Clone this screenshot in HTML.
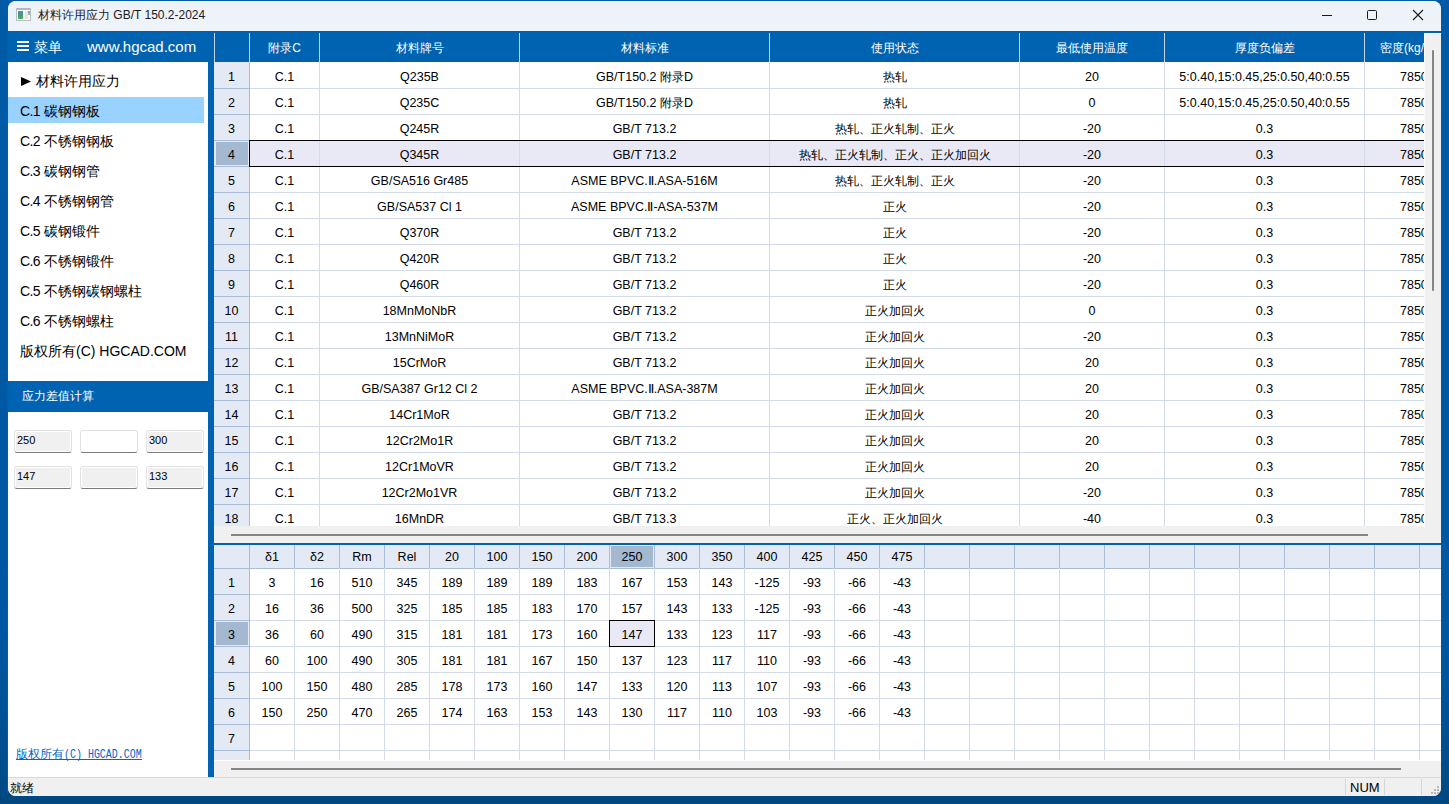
<!DOCTYPE html><html><head><meta charset="utf-8"><style>
*{margin:0;padding:0;box-sizing:border-box}
html,body{width:1449px;height:804px;overflow:hidden}
body{position:relative;font-family:"Liberation Sans",sans-serif;color:#000;
background:linear-gradient(180deg,#005aa6 0%,#0057a1 80%,#004d8a 97%,#00467f 100%)}
.abs{position:absolute}
#win{position:absolute;left:8px;top:1px;width:1433px;height:795px;border-radius:8px;overflow:hidden;background:#f0f0f0}
.tb{position:absolute;left:0;top:0;width:1433px;height:30px;background:#eef2f9}
.t{position:absolute;white-space:nowrap}
.c{text-align:center}
</style></head><body>
<div class="abs" style="left:7px;top:8px;width:1px;height:786px;background:#1f5684"></div>
<div id="win">
<div class="abs" style="left:0px;top:0px;width:1433px;height:30px;background:#eef2f9"></div>
<div class="abs" style="left:8px;top:7px;width:15px;height:13px;background:#fafafa;border:1px solid #b9bdc4;border-top:2px solid #b3b7bf;border-radius:1px"><div class="abs" style="left:1px;top:1px;width:5px;height:8px;background:linear-gradient(180deg,#5d88c4,#3f9b7a 50%,#4fb060)"></div><div class="abs" style="left:8px;top:1px;width:3px;height:8px;background:#e6e6e6"></div><div class="abs" style="left:11px;top:1px;width:2px;height:4px;background:linear-gradient(180deg,#7aa0d8,#8fd07a)"></div></div>
<div class="t" style="left:30px;top:5px;font-size:12px;line-height:18px;color:#1a1a1a">材料许用应力 GB/T 150.2-2024</div>
<div class="abs" style="left:1313px;top:9px;width:12px;height:12px;"><svg width="12" height="12" style="display:block"><rect x="1" y="5" width="10" height="1" fill="#1a1a1a"/></svg></div>
<div class="abs" style="left:1358px;top:8px;width:12px;height:12px;"><svg width="12" height="12" style="display:block"><rect x="1.5" y="1.5" width="9" height="9" rx="1" fill="none" stroke="#1a1a1a" stroke-width="1"/></svg></div>
<div class="abs" style="left:1404px;top:8px;width:12px;height:12px;"><svg width="12" height="12" style="display:block"><path d="M1 1L11 11M11 1L1 11" stroke="#1a1a1a" stroke-width="1.1"/></svg></div>
<div class="abs" style="left:0px;top:30px;width:206px;height:746px;background:#0063b1"></div>
<div class="abs" style="left:0px;top:61px;width:200px;height:319px;background:#fff"></div>
<div class="abs" style="left:0px;top:411px;width:200px;height:365px;background:#fff"></div>
<div class="abs" style="left:9px;top:40px;width:12px;height:2px;background:#fff"></div>
<div class="abs" style="left:9px;top:44px;width:12px;height:2px;background:#fff"></div>
<div class="abs" style="left:9px;top:48px;width:12px;height:2px;background:#fff"></div>
<div class="t" style="left:26px;top:37px;font-size:14px;line-height:18px;color:#fff">菜单</div>
<div class="t" style="left:79px;top:37px;font-size:15px;line-height:18px;color:#fff">www.hgcad.com</div>
<div class="abs" style="left:0px;top:96px;width:196px;height:26px;background:#99d1ff"></div>
<div class="abs" style="left:13px;top:76px;width:10px;height:9px;"><svg width="10" height="9" style="display:block"><path d="M0 0L10 4.5L0 9Z" fill="#000"/></svg></div>
<div class="t" style="left:28px;top:71px;font-size:14px;line-height:18px;color:#000">材料许用应力</div>
<div class="t" style="left:12px;top:101px;font-size:14px;line-height:18px;color:#000"><span style="letter-spacing:-0.6px">C.1</span> 碳钢钢板</div>
<div class="t" style="left:12px;top:131px;font-size:14px;line-height:18px;color:#000"><span style="letter-spacing:-0.6px">C.2</span> 不锈钢钢板</div>
<div class="t" style="left:12px;top:161px;font-size:14px;line-height:18px;color:#000"><span style="letter-spacing:-0.6px">C.3</span> 碳钢钢管</div>
<div class="t" style="left:12px;top:191px;font-size:14px;line-height:18px;color:#000"><span style="letter-spacing:-0.6px">C.4</span> 不锈钢钢管</div>
<div class="t" style="left:12px;top:221px;font-size:14px;line-height:18px;color:#000"><span style="letter-spacing:-0.6px">C.5</span> 碳钢锻件</div>
<div class="t" style="left:12px;top:251px;font-size:14px;line-height:18px;color:#000"><span style="letter-spacing:-0.6px">C.6</span> 不锈钢锻件</div>
<div class="t" style="left:12px;top:281px;font-size:14px;line-height:18px;color:#000"><span style="letter-spacing:-0.6px">C.5</span> 不锈钢碳钢螺柱</div>
<div class="t" style="left:12px;top:311px;font-size:14px;line-height:18px;color:#000"><span style="letter-spacing:-0.6px">C.6</span> 不锈钢螺柱</div>
<div class="t" style="left:12px;top:341px;font-size:14px;line-height:18px;color:#000">版权所有(C) HGCAD.COM</div>
<div class="t" style="left:14px;top:386px;font-size:12px;line-height:18px;color:#fff">应力差值计算</div>
<div class="abs" style="left:6px;top:429px;width:58px;height:23px;background:#f0f0f0;border:1px solid #e2e2e2;border-bottom:1px solid #7c7c7c;border-radius:3px;box-shadow:inset 0 0 0 1px #fff"><div class="t" style="left:2px;top:2px;font-size:11px;line-height:14px">250</div></div>
<div class="abs" style="left:72px;top:429px;width:58px;height:23px;background:#fff;border:1px solid #e2e2e2;border-bottom:1px solid #7c7c7c;border-radius:3px;box-shadow:inset 0 0 0 1px #fff"><div class="t" style="left:2px;top:2px;font-size:11px;line-height:14px"></div></div>
<div class="abs" style="left:138px;top:429px;width:58px;height:23px;background:#f0f0f0;border:1px solid #e2e2e2;border-bottom:1px solid #7c7c7c;border-radius:3px;box-shadow:inset 0 0 0 1px #fff"><div class="t" style="left:2px;top:2px;font-size:11px;line-height:14px">300</div></div>
<div class="abs" style="left:6px;top:465px;width:58px;height:23px;background:#f0f0f0;border:1px solid #e2e2e2;border-bottom:1px solid #7c7c7c;border-radius:3px;box-shadow:inset 0 0 0 1px #fff"><div class="t" style="left:2px;top:2px;font-size:11px;line-height:14px">147</div></div>
<div class="abs" style="left:72px;top:465px;width:58px;height:23px;background:#f0f0f0;border:1px solid #e2e2e2;border-bottom:1px solid #7c7c7c;border-radius:3px;box-shadow:inset 0 0 0 1px #fff"><div class="t" style="left:2px;top:2px;font-size:11px;line-height:14px"></div></div>
<div class="abs" style="left:138px;top:465px;width:58px;height:23px;background:#f0f0f0;border:1px solid #e2e2e2;border-bottom:1px solid #7c7c7c;border-radius:3px;box-shadow:inset 0 0 0 1px #fff"><div class="t" style="left:2px;top:2px;font-size:11px;line-height:14px">133</div></div>
<div class="t" style="left:8px;top:745px;line-height:14px;color:#0066cc"><span style="font-size:12px">版权所有</span><span style="display:inline-block;font-family:'Liberation Mono',monospace;font-size:12px;width:94px;transform:scaleX(0.83);transform-origin:0 0">(C) HGCAD.COM</span></div>
<div class="abs" style="left:8px;top:758px;width:126px;height:1px;background:#0066cc"></div>
<div class="abs" style="left:206px;top:30px;width:1227px;height:495px;background:#fff"></div>
<div class="abs" style="left:206px;top:30px;width:1227px;height:31px;background:#0063b1"></div>
<div class="abs" style="left:206px;top:30px;width:1210px;height:496px;overflow:hidden">
<div class="abs" style="left:0px;top:2px;width:1px;height:29px;background:#c5d6ea"></div>
<div class="abs" style="left:35px;top:2px;width:1px;height:29px;background:#c5d6ea"></div>
<div class="abs" style="left:105px;top:2px;width:1px;height:29px;background:#c5d6ea"></div>
<div class="abs" style="left:305px;top:2px;width:1px;height:29px;background:#c5d6ea"></div>
<div class="abs" style="left:555px;top:2px;width:1px;height:29px;background:#c5d6ea"></div>
<div class="abs" style="left:805px;top:2px;width:1px;height:29px;background:#c5d6ea"></div>
<div class="abs" style="left:950px;top:2px;width:1px;height:29px;background:#c5d6ea"></div>
<div class="abs" style="left:1150px;top:2px;width:1px;height:29px;background:#c5d6ea"></div>
<div class="t c" style="left:36px;top:3px;width:69px;height:29px;font-size:12px;line-height:29px;color:#fff">附录C</div>
<div class="t c" style="left:106px;top:3px;width:199px;height:29px;font-size:12px;line-height:29px;color:#fff">材料牌号</div>
<div class="t c" style="left:306px;top:3px;width:249px;height:29px;font-size:12px;line-height:29px;color:#fff">材料标准</div>
<div class="t c" style="left:556px;top:3px;width:249px;height:29px;font-size:12px;line-height:29px;color:#fff">使用状态</div>
<div class="t c" style="left:806px;top:3px;width:144px;height:29px;font-size:12px;line-height:29px;color:#fff">最低使用温度</div>
<div class="t c" style="left:951px;top:3px;width:199px;height:29px;font-size:12px;line-height:29px;color:#fff">厚度负偏差</div>
<div class="t c" style="left:1166px;top:3px;width:200px;height:29px;font-size:12px;line-height:29px;color:#fff;text-align:left">密度(kg/m3)</div>
<div class="abs" style="left:0px;top:31px;width:35px;height:464px;background:#e3eaf6"></div>
<div class="abs" style="left:2px;top:111px;width:32px;height:23px;background:#a4b9d0"></div>
<div class="abs" style="left:35px;top:110px;width:1175px;height:25px;background:#e9e9f5"></div>
<div class="abs" style="left:0px;top:57px;width:35px;height:1px;background:#a9bdd6"></div>
<div class="abs" style="left:35px;top:57px;width:1175px;height:1px;background:#d3dbe9"></div>
<div class="abs" style="left:0px;top:83px;width:35px;height:1px;background:#a9bdd6"></div>
<div class="abs" style="left:35px;top:83px;width:1175px;height:1px;background:#d3dbe9"></div>
<div class="abs" style="left:0px;top:109px;width:35px;height:1px;background:#a9bdd6"></div>
<div class="abs" style="left:35px;top:109px;width:1175px;height:1px;background:#d3dbe9"></div>
<div class="abs" style="left:0px;top:135px;width:35px;height:1px;background:#a9bdd6"></div>
<div class="abs" style="left:35px;top:135px;width:1175px;height:1px;background:#d3dbe9"></div>
<div class="abs" style="left:0px;top:161px;width:35px;height:1px;background:#a9bdd6"></div>
<div class="abs" style="left:35px;top:161px;width:1175px;height:1px;background:#d3dbe9"></div>
<div class="abs" style="left:0px;top:187px;width:35px;height:1px;background:#a9bdd6"></div>
<div class="abs" style="left:35px;top:187px;width:1175px;height:1px;background:#d3dbe9"></div>
<div class="abs" style="left:0px;top:213px;width:35px;height:1px;background:#a9bdd6"></div>
<div class="abs" style="left:35px;top:213px;width:1175px;height:1px;background:#d3dbe9"></div>
<div class="abs" style="left:0px;top:239px;width:35px;height:1px;background:#a9bdd6"></div>
<div class="abs" style="left:35px;top:239px;width:1175px;height:1px;background:#d3dbe9"></div>
<div class="abs" style="left:0px;top:265px;width:35px;height:1px;background:#a9bdd6"></div>
<div class="abs" style="left:35px;top:265px;width:1175px;height:1px;background:#d3dbe9"></div>
<div class="abs" style="left:0px;top:291px;width:35px;height:1px;background:#a9bdd6"></div>
<div class="abs" style="left:35px;top:291px;width:1175px;height:1px;background:#d3dbe9"></div>
<div class="abs" style="left:0px;top:317px;width:35px;height:1px;background:#a9bdd6"></div>
<div class="abs" style="left:35px;top:317px;width:1175px;height:1px;background:#d3dbe9"></div>
<div class="abs" style="left:0px;top:343px;width:35px;height:1px;background:#a9bdd6"></div>
<div class="abs" style="left:35px;top:343px;width:1175px;height:1px;background:#d3dbe9"></div>
<div class="abs" style="left:0px;top:369px;width:35px;height:1px;background:#a9bdd6"></div>
<div class="abs" style="left:35px;top:369px;width:1175px;height:1px;background:#d3dbe9"></div>
<div class="abs" style="left:0px;top:395px;width:35px;height:1px;background:#a9bdd6"></div>
<div class="abs" style="left:35px;top:395px;width:1175px;height:1px;background:#d3dbe9"></div>
<div class="abs" style="left:0px;top:421px;width:35px;height:1px;background:#a9bdd6"></div>
<div class="abs" style="left:35px;top:421px;width:1175px;height:1px;background:#d3dbe9"></div>
<div class="abs" style="left:0px;top:447px;width:35px;height:1px;background:#a9bdd6"></div>
<div class="abs" style="left:35px;top:447px;width:1175px;height:1px;background:#d3dbe9"></div>
<div class="abs" style="left:0px;top:473px;width:35px;height:1px;background:#a9bdd6"></div>
<div class="abs" style="left:35px;top:473px;width:1175px;height:1px;background:#d3dbe9"></div>
<div class="abs" style="left:0px;top:499px;width:35px;height:1px;background:#a9bdd6"></div>
<div class="abs" style="left:35px;top:499px;width:1175px;height:1px;background:#d3dbe9"></div>
<div class="t c" style="left:0px;top:33px;width:35px;height:26px;font-size:12.5px;line-height:26px">1</div>
<div class="t c" style="left:36px;top:33px;width:69px;height:26px;font-size:12.5px;line-height:26px">C.1</div>
<div class="t c" style="left:106px;top:33px;width:199px;height:26px;font-size:12.5px;line-height:26px">Q235B</div>
<div class="t c" style="left:306px;top:33px;width:249px;height:26px;font-size:12.5px;line-height:26px">GB/T150.2 <span style="font-size:12px">附录</span>D</div>
<div class="t c" style="left:556px;top:33px;width:249px;height:26px;font-size:12.5px;line-height:26px"><span style="font-size:12px">热轧</span></div>
<div class="t c" style="left:806px;top:33px;width:144px;height:26px;font-size:12.5px;line-height:26px">20</div>
<div class="t c" style="left:951px;top:33px;width:199px;height:26px;font-size:12.5px;line-height:26px">5:0.40,15:0.45,25:0.50,40:0.55</div>
<div class="t c" style="left:1186px;top:33px;width:100px;height:26px;font-size:12.5px;line-height:26px;text-align:left">7850</div>
<div class="t c" style="left:0px;top:59px;width:35px;height:26px;font-size:12.5px;line-height:26px">2</div>
<div class="t c" style="left:36px;top:59px;width:69px;height:26px;font-size:12.5px;line-height:26px">C.1</div>
<div class="t c" style="left:106px;top:59px;width:199px;height:26px;font-size:12.5px;line-height:26px">Q235C</div>
<div class="t c" style="left:306px;top:59px;width:249px;height:26px;font-size:12.5px;line-height:26px">GB/T150.2 <span style="font-size:12px">附录</span>D</div>
<div class="t c" style="left:556px;top:59px;width:249px;height:26px;font-size:12.5px;line-height:26px"><span style="font-size:12px">热轧</span></div>
<div class="t c" style="left:806px;top:59px;width:144px;height:26px;font-size:12.5px;line-height:26px">0</div>
<div class="t c" style="left:951px;top:59px;width:199px;height:26px;font-size:12.5px;line-height:26px">5:0.40,15:0.45,25:0.50,40:0.55</div>
<div class="t c" style="left:1186px;top:59px;width:100px;height:26px;font-size:12.5px;line-height:26px;text-align:left">7850</div>
<div class="t c" style="left:0px;top:85px;width:35px;height:26px;font-size:12.5px;line-height:26px">3</div>
<div class="t c" style="left:36px;top:85px;width:69px;height:26px;font-size:12.5px;line-height:26px">C.1</div>
<div class="t c" style="left:106px;top:85px;width:199px;height:26px;font-size:12.5px;line-height:26px">Q245R</div>
<div class="t c" style="left:306px;top:85px;width:249px;height:26px;font-size:12.5px;line-height:26px">GB/T 713.2</div>
<div class="t c" style="left:556px;top:85px;width:249px;height:26px;font-size:12.5px;line-height:26px"><span style="font-size:12px">热轧、正火轧制、正火</span></div>
<div class="t c" style="left:806px;top:85px;width:144px;height:26px;font-size:12.5px;line-height:26px">-20</div>
<div class="t c" style="left:951px;top:85px;width:199px;height:26px;font-size:12.5px;line-height:26px">0.3</div>
<div class="t c" style="left:1186px;top:85px;width:100px;height:26px;font-size:12.5px;line-height:26px;text-align:left">7850</div>
<div class="t c" style="left:0px;top:111px;width:35px;height:26px;font-size:12.5px;line-height:26px">4</div>
<div class="t c" style="left:36px;top:111px;width:69px;height:26px;font-size:12.5px;line-height:26px">C.1</div>
<div class="t c" style="left:106px;top:111px;width:199px;height:26px;font-size:12.5px;line-height:26px">Q345R</div>
<div class="t c" style="left:306px;top:111px;width:249px;height:26px;font-size:12.5px;line-height:26px">GB/T 713.2</div>
<div class="t c" style="left:556px;top:111px;width:249px;height:26px;font-size:12.5px;line-height:26px"><span style="font-size:12px">热轧、正火轧制、正火、正火加回火</span></div>
<div class="t c" style="left:806px;top:111px;width:144px;height:26px;font-size:12.5px;line-height:26px">-20</div>
<div class="t c" style="left:951px;top:111px;width:199px;height:26px;font-size:12.5px;line-height:26px">0.3</div>
<div class="t c" style="left:1186px;top:111px;width:100px;height:26px;font-size:12.5px;line-height:26px;text-align:left">7850</div>
<div class="t c" style="left:0px;top:137px;width:35px;height:26px;font-size:12.5px;line-height:26px">5</div>
<div class="t c" style="left:36px;top:137px;width:69px;height:26px;font-size:12.5px;line-height:26px">C.1</div>
<div class="t c" style="left:106px;top:137px;width:199px;height:26px;font-size:12.5px;line-height:26px">GB/SA516 Gr485</div>
<div class="t c" style="left:306px;top:137px;width:249px;height:26px;font-size:12.5px;line-height:26px">ASME BPVC.Ⅱ.ASA-516M</div>
<div class="t c" style="left:556px;top:137px;width:249px;height:26px;font-size:12.5px;line-height:26px"><span style="font-size:12px">热轧、正火轧制、正火</span></div>
<div class="t c" style="left:806px;top:137px;width:144px;height:26px;font-size:12.5px;line-height:26px">-20</div>
<div class="t c" style="left:951px;top:137px;width:199px;height:26px;font-size:12.5px;line-height:26px">0.3</div>
<div class="t c" style="left:1186px;top:137px;width:100px;height:26px;font-size:12.5px;line-height:26px;text-align:left">7850</div>
<div class="t c" style="left:0px;top:163px;width:35px;height:26px;font-size:12.5px;line-height:26px">6</div>
<div class="t c" style="left:36px;top:163px;width:69px;height:26px;font-size:12.5px;line-height:26px">C.1</div>
<div class="t c" style="left:106px;top:163px;width:199px;height:26px;font-size:12.5px;line-height:26px">GB/SA537 Cl 1</div>
<div class="t c" style="left:306px;top:163px;width:249px;height:26px;font-size:12.5px;line-height:26px">ASME BPVC.Ⅱ-ASA-537M</div>
<div class="t c" style="left:556px;top:163px;width:249px;height:26px;font-size:12.5px;line-height:26px"><span style="font-size:12px">正火</span></div>
<div class="t c" style="left:806px;top:163px;width:144px;height:26px;font-size:12.5px;line-height:26px">-20</div>
<div class="t c" style="left:951px;top:163px;width:199px;height:26px;font-size:12.5px;line-height:26px">0.3</div>
<div class="t c" style="left:1186px;top:163px;width:100px;height:26px;font-size:12.5px;line-height:26px;text-align:left">7850</div>
<div class="t c" style="left:0px;top:189px;width:35px;height:26px;font-size:12.5px;line-height:26px">7</div>
<div class="t c" style="left:36px;top:189px;width:69px;height:26px;font-size:12.5px;line-height:26px">C.1</div>
<div class="t c" style="left:106px;top:189px;width:199px;height:26px;font-size:12.5px;line-height:26px">Q370R</div>
<div class="t c" style="left:306px;top:189px;width:249px;height:26px;font-size:12.5px;line-height:26px">GB/T 713.2</div>
<div class="t c" style="left:556px;top:189px;width:249px;height:26px;font-size:12.5px;line-height:26px"><span style="font-size:12px">正火</span></div>
<div class="t c" style="left:806px;top:189px;width:144px;height:26px;font-size:12.5px;line-height:26px">-20</div>
<div class="t c" style="left:951px;top:189px;width:199px;height:26px;font-size:12.5px;line-height:26px">0.3</div>
<div class="t c" style="left:1186px;top:189px;width:100px;height:26px;font-size:12.5px;line-height:26px;text-align:left">7850</div>
<div class="t c" style="left:0px;top:215px;width:35px;height:26px;font-size:12.5px;line-height:26px">8</div>
<div class="t c" style="left:36px;top:215px;width:69px;height:26px;font-size:12.5px;line-height:26px">C.1</div>
<div class="t c" style="left:106px;top:215px;width:199px;height:26px;font-size:12.5px;line-height:26px">Q420R</div>
<div class="t c" style="left:306px;top:215px;width:249px;height:26px;font-size:12.5px;line-height:26px">GB/T 713.2</div>
<div class="t c" style="left:556px;top:215px;width:249px;height:26px;font-size:12.5px;line-height:26px"><span style="font-size:12px">正火</span></div>
<div class="t c" style="left:806px;top:215px;width:144px;height:26px;font-size:12.5px;line-height:26px">-20</div>
<div class="t c" style="left:951px;top:215px;width:199px;height:26px;font-size:12.5px;line-height:26px">0.3</div>
<div class="t c" style="left:1186px;top:215px;width:100px;height:26px;font-size:12.5px;line-height:26px;text-align:left">7850</div>
<div class="t c" style="left:0px;top:241px;width:35px;height:26px;font-size:12.5px;line-height:26px">9</div>
<div class="t c" style="left:36px;top:241px;width:69px;height:26px;font-size:12.5px;line-height:26px">C.1</div>
<div class="t c" style="left:106px;top:241px;width:199px;height:26px;font-size:12.5px;line-height:26px">Q460R</div>
<div class="t c" style="left:306px;top:241px;width:249px;height:26px;font-size:12.5px;line-height:26px">GB/T 713.2</div>
<div class="t c" style="left:556px;top:241px;width:249px;height:26px;font-size:12.5px;line-height:26px"><span style="font-size:12px">正火</span></div>
<div class="t c" style="left:806px;top:241px;width:144px;height:26px;font-size:12.5px;line-height:26px">-20</div>
<div class="t c" style="left:951px;top:241px;width:199px;height:26px;font-size:12.5px;line-height:26px">0.3</div>
<div class="t c" style="left:1186px;top:241px;width:100px;height:26px;font-size:12.5px;line-height:26px;text-align:left">7850</div>
<div class="t c" style="left:0px;top:267px;width:35px;height:26px;font-size:12.5px;line-height:26px">10</div>
<div class="t c" style="left:36px;top:267px;width:69px;height:26px;font-size:12.5px;line-height:26px">C.1</div>
<div class="t c" style="left:106px;top:267px;width:199px;height:26px;font-size:12.5px;line-height:26px">18MnMoNbR</div>
<div class="t c" style="left:306px;top:267px;width:249px;height:26px;font-size:12.5px;line-height:26px">GB/T 713.2</div>
<div class="t c" style="left:556px;top:267px;width:249px;height:26px;font-size:12.5px;line-height:26px"><span style="font-size:12px">正火加回火</span></div>
<div class="t c" style="left:806px;top:267px;width:144px;height:26px;font-size:12.5px;line-height:26px">0</div>
<div class="t c" style="left:951px;top:267px;width:199px;height:26px;font-size:12.5px;line-height:26px">0.3</div>
<div class="t c" style="left:1186px;top:267px;width:100px;height:26px;font-size:12.5px;line-height:26px;text-align:left">7850</div>
<div class="t c" style="left:0px;top:293px;width:35px;height:26px;font-size:12.5px;line-height:26px">11</div>
<div class="t c" style="left:36px;top:293px;width:69px;height:26px;font-size:12.5px;line-height:26px">C.1</div>
<div class="t c" style="left:106px;top:293px;width:199px;height:26px;font-size:12.5px;line-height:26px">13MnNiMoR</div>
<div class="t c" style="left:306px;top:293px;width:249px;height:26px;font-size:12.5px;line-height:26px">GB/T 713.2</div>
<div class="t c" style="left:556px;top:293px;width:249px;height:26px;font-size:12.5px;line-height:26px"><span style="font-size:12px">正火加回火</span></div>
<div class="t c" style="left:806px;top:293px;width:144px;height:26px;font-size:12.5px;line-height:26px">-20</div>
<div class="t c" style="left:951px;top:293px;width:199px;height:26px;font-size:12.5px;line-height:26px">0.3</div>
<div class="t c" style="left:1186px;top:293px;width:100px;height:26px;font-size:12.5px;line-height:26px;text-align:left">7850</div>
<div class="t c" style="left:0px;top:319px;width:35px;height:26px;font-size:12.5px;line-height:26px">12</div>
<div class="t c" style="left:36px;top:319px;width:69px;height:26px;font-size:12.5px;line-height:26px">C.1</div>
<div class="t c" style="left:106px;top:319px;width:199px;height:26px;font-size:12.5px;line-height:26px">15CrMoR</div>
<div class="t c" style="left:306px;top:319px;width:249px;height:26px;font-size:12.5px;line-height:26px">GB/T 713.2</div>
<div class="t c" style="left:556px;top:319px;width:249px;height:26px;font-size:12.5px;line-height:26px"><span style="font-size:12px">正火加回火</span></div>
<div class="t c" style="left:806px;top:319px;width:144px;height:26px;font-size:12.5px;line-height:26px">20</div>
<div class="t c" style="left:951px;top:319px;width:199px;height:26px;font-size:12.5px;line-height:26px">0.3</div>
<div class="t c" style="left:1186px;top:319px;width:100px;height:26px;font-size:12.5px;line-height:26px;text-align:left">7850</div>
<div class="t c" style="left:0px;top:345px;width:35px;height:26px;font-size:12.5px;line-height:26px">13</div>
<div class="t c" style="left:36px;top:345px;width:69px;height:26px;font-size:12.5px;line-height:26px">C.1</div>
<div class="t c" style="left:106px;top:345px;width:199px;height:26px;font-size:12.5px;line-height:26px">GB/SA387 Gr12 Cl 2</div>
<div class="t c" style="left:306px;top:345px;width:249px;height:26px;font-size:12.5px;line-height:26px">ASME BPVC.Ⅱ.ASA-387M</div>
<div class="t c" style="left:556px;top:345px;width:249px;height:26px;font-size:12.5px;line-height:26px"><span style="font-size:12px">正火加回火</span></div>
<div class="t c" style="left:806px;top:345px;width:144px;height:26px;font-size:12.5px;line-height:26px">20</div>
<div class="t c" style="left:951px;top:345px;width:199px;height:26px;font-size:12.5px;line-height:26px">0.3</div>
<div class="t c" style="left:1186px;top:345px;width:100px;height:26px;font-size:12.5px;line-height:26px;text-align:left">7850</div>
<div class="t c" style="left:0px;top:371px;width:35px;height:26px;font-size:12.5px;line-height:26px">14</div>
<div class="t c" style="left:36px;top:371px;width:69px;height:26px;font-size:12.5px;line-height:26px">C.1</div>
<div class="t c" style="left:106px;top:371px;width:199px;height:26px;font-size:12.5px;line-height:26px">14Cr1MoR</div>
<div class="t c" style="left:306px;top:371px;width:249px;height:26px;font-size:12.5px;line-height:26px">GB/T 713.2</div>
<div class="t c" style="left:556px;top:371px;width:249px;height:26px;font-size:12.5px;line-height:26px"><span style="font-size:12px">正火加回火</span></div>
<div class="t c" style="left:806px;top:371px;width:144px;height:26px;font-size:12.5px;line-height:26px">20</div>
<div class="t c" style="left:951px;top:371px;width:199px;height:26px;font-size:12.5px;line-height:26px">0.3</div>
<div class="t c" style="left:1186px;top:371px;width:100px;height:26px;font-size:12.5px;line-height:26px;text-align:left">7850</div>
<div class="t c" style="left:0px;top:397px;width:35px;height:26px;font-size:12.5px;line-height:26px">15</div>
<div class="t c" style="left:36px;top:397px;width:69px;height:26px;font-size:12.5px;line-height:26px">C.1</div>
<div class="t c" style="left:106px;top:397px;width:199px;height:26px;font-size:12.5px;line-height:26px">12Cr2Mo1R</div>
<div class="t c" style="left:306px;top:397px;width:249px;height:26px;font-size:12.5px;line-height:26px">GB/T 713.2</div>
<div class="t c" style="left:556px;top:397px;width:249px;height:26px;font-size:12.5px;line-height:26px"><span style="font-size:12px">正火加回火</span></div>
<div class="t c" style="left:806px;top:397px;width:144px;height:26px;font-size:12.5px;line-height:26px">20</div>
<div class="t c" style="left:951px;top:397px;width:199px;height:26px;font-size:12.5px;line-height:26px">0.3</div>
<div class="t c" style="left:1186px;top:397px;width:100px;height:26px;font-size:12.5px;line-height:26px;text-align:left">7850</div>
<div class="t c" style="left:0px;top:423px;width:35px;height:26px;font-size:12.5px;line-height:26px">16</div>
<div class="t c" style="left:36px;top:423px;width:69px;height:26px;font-size:12.5px;line-height:26px">C.1</div>
<div class="t c" style="left:106px;top:423px;width:199px;height:26px;font-size:12.5px;line-height:26px">12Cr1MoVR</div>
<div class="t c" style="left:306px;top:423px;width:249px;height:26px;font-size:12.5px;line-height:26px">GB/T 713.2</div>
<div class="t c" style="left:556px;top:423px;width:249px;height:26px;font-size:12.5px;line-height:26px"><span style="font-size:12px">正火加回火</span></div>
<div class="t c" style="left:806px;top:423px;width:144px;height:26px;font-size:12.5px;line-height:26px">20</div>
<div class="t c" style="left:951px;top:423px;width:199px;height:26px;font-size:12.5px;line-height:26px">0.3</div>
<div class="t c" style="left:1186px;top:423px;width:100px;height:26px;font-size:12.5px;line-height:26px;text-align:left">7850</div>
<div class="t c" style="left:0px;top:449px;width:35px;height:26px;font-size:12.5px;line-height:26px">17</div>
<div class="t c" style="left:36px;top:449px;width:69px;height:26px;font-size:12.5px;line-height:26px">C.1</div>
<div class="t c" style="left:106px;top:449px;width:199px;height:26px;font-size:12.5px;line-height:26px">12Cr2Mo1VR</div>
<div class="t c" style="left:306px;top:449px;width:249px;height:26px;font-size:12.5px;line-height:26px">GB/T 713.2</div>
<div class="t c" style="left:556px;top:449px;width:249px;height:26px;font-size:12.5px;line-height:26px"><span style="font-size:12px">正火加回火</span></div>
<div class="t c" style="left:806px;top:449px;width:144px;height:26px;font-size:12.5px;line-height:26px">-20</div>
<div class="t c" style="left:951px;top:449px;width:199px;height:26px;font-size:12.5px;line-height:26px">0.3</div>
<div class="t c" style="left:1186px;top:449px;width:100px;height:26px;font-size:12.5px;line-height:26px;text-align:left">7850</div>
<div class="t c" style="left:0px;top:475px;width:35px;height:26px;font-size:12.5px;line-height:26px">18</div>
<div class="t c" style="left:36px;top:475px;width:69px;height:26px;font-size:12.5px;line-height:26px">C.1</div>
<div class="t c" style="left:106px;top:475px;width:199px;height:26px;font-size:12.5px;line-height:26px">16MnDR</div>
<div class="t c" style="left:306px;top:475px;width:249px;height:26px;font-size:12.5px;line-height:26px">GB/T 713.3</div>
<div class="t c" style="left:556px;top:475px;width:249px;height:26px;font-size:12.5px;line-height:26px"><span style="font-size:12px">正火、正火加回火</span></div>
<div class="t c" style="left:806px;top:475px;width:144px;height:26px;font-size:12.5px;line-height:26px">-40</div>
<div class="t c" style="left:951px;top:475px;width:199px;height:26px;font-size:12.5px;line-height:26px">0.3</div>
<div class="t c" style="left:1186px;top:475px;width:100px;height:26px;font-size:12.5px;line-height:26px;text-align:left">7850</div>
<div class="abs" style="left:35px;top:31px;width:1px;height:464px;background:#a9bdd6"></div>
<div class="abs" style="left:105px;top:31px;width:1px;height:464px;background:#d3dbe9"></div>
<div class="abs" style="left:305px;top:31px;width:1px;height:464px;background:#d3dbe9"></div>
<div class="abs" style="left:555px;top:31px;width:1px;height:464px;background:#d3dbe9"></div>
<div class="abs" style="left:805px;top:31px;width:1px;height:464px;background:#d3dbe9"></div>
<div class="abs" style="left:950px;top:31px;width:1px;height:464px;background:#d3dbe9"></div>
<div class="abs" style="left:1150px;top:31px;width:1px;height:464px;background:#d3dbe9"></div>
<div class="abs" style="left:35px;top:109px;width:1175px;height:27px;border:1px solid #000;border-right:none"></div>
</div>
<div class="abs" style="left:1416px;top:32px;width:17px;height:510px;background:#f0f0f0"></div>
<div class="abs" style="left:1416px;top:32px;width:1px;height:494px;background:#fbfbfb"></div>
<div class="abs" style="left:1416px;top:32px;width:17px;height:1px;background:#fbfbfb"></div>
<div class="abs" style="left:1424px;top:49px;width:2px;height:241px;background:#858585;border-radius:1px"></div>
<div class="abs" style="left:206px;top:526px;width:1210px;height:16px;background:#f0f0f0"></div>
<div class="abs" style="left:223px;top:533px;width:1137px;height:2px;background:#858585"></div>
<div class="abs" style="left:206px;top:542px;width:1227px;height:2px;background:#0063b1"></div>
<div class="abs" style="left:206px;top:544px;width:1227px;height:216px;overflow:hidden;background:#fff">
<div class="abs" style="left:0px;top:0px;width:1227px;height:23px;background:#e3eaf6"></div>
<div class="abs" style="left:0px;top:23px;width:35px;height:192px;background:#e3eaf6"></div>
<div class="abs" style="left:0px;top:23px;width:1227px;height:1px;background:#a9bdd6"></div>
<div class="abs" style="left:35px;top:0px;width:1px;height:23px;background:#a9bdd6"></div>
<div class="abs" style="left:80px;top:0px;width:1px;height:23px;background:#a9bdd6"></div>
<div class="abs" style="left:125px;top:0px;width:1px;height:23px;background:#a9bdd6"></div>
<div class="abs" style="left:170px;top:0px;width:1px;height:23px;background:#a9bdd6"></div>
<div class="abs" style="left:215px;top:0px;width:1px;height:23px;background:#a9bdd6"></div>
<div class="abs" style="left:260px;top:0px;width:1px;height:23px;background:#a9bdd6"></div>
<div class="abs" style="left:305px;top:0px;width:1px;height:23px;background:#a9bdd6"></div>
<div class="abs" style="left:350px;top:0px;width:1px;height:23px;background:#a9bdd6"></div>
<div class="abs" style="left:395px;top:0px;width:1px;height:23px;background:#a9bdd6"></div>
<div class="abs" style="left:440px;top:0px;width:1px;height:23px;background:#a9bdd6"></div>
<div class="abs" style="left:485px;top:0px;width:1px;height:23px;background:#a9bdd6"></div>
<div class="abs" style="left:530px;top:0px;width:1px;height:23px;background:#a9bdd6"></div>
<div class="abs" style="left:575px;top:0px;width:1px;height:23px;background:#a9bdd6"></div>
<div class="abs" style="left:620px;top:0px;width:1px;height:23px;background:#a9bdd6"></div>
<div class="abs" style="left:665px;top:0px;width:1px;height:23px;background:#a9bdd6"></div>
<div class="abs" style="left:710px;top:0px;width:1px;height:23px;background:#a9bdd6"></div>
<div class="abs" style="left:755px;top:0px;width:1px;height:23px;background:#a9bdd6"></div>
<div class="abs" style="left:800px;top:0px;width:1px;height:23px;background:#a9bdd6"></div>
<div class="abs" style="left:845px;top:0px;width:1px;height:23px;background:#a9bdd6"></div>
<div class="abs" style="left:890px;top:0px;width:1px;height:23px;background:#a9bdd6"></div>
<div class="abs" style="left:935px;top:0px;width:1px;height:23px;background:#a9bdd6"></div>
<div class="abs" style="left:980px;top:0px;width:1px;height:23px;background:#a9bdd6"></div>
<div class="abs" style="left:1025px;top:0px;width:1px;height:23px;background:#a9bdd6"></div>
<div class="abs" style="left:1070px;top:0px;width:1px;height:23px;background:#a9bdd6"></div>
<div class="abs" style="left:1115px;top:0px;width:1px;height:23px;background:#a9bdd6"></div>
<div class="abs" style="left:1160px;top:0px;width:1px;height:23px;background:#a9bdd6"></div>
<div class="abs" style="left:1205px;top:0px;width:1px;height:23px;background:#a9bdd6"></div>
<div class="abs" style="left:397px;top:1px;width:42px;height:21px;background:#a4b9d0"></div>
<div class="t c" style="left:36px;top:1px;width:44px;height:23px;font-size:12.5px;line-height:23px">δ1</div>
<div class="t c" style="left:81px;top:1px;width:44px;height:23px;font-size:12.5px;line-height:23px">δ2</div>
<div class="t c" style="left:126px;top:1px;width:44px;height:23px;font-size:12.5px;line-height:23px">Rm</div>
<div class="t c" style="left:171px;top:1px;width:44px;height:23px;font-size:12.5px;line-height:23px">Rel</div>
<div class="t c" style="left:216px;top:1px;width:44px;height:23px;font-size:12.5px;line-height:23px">20</div>
<div class="t c" style="left:261px;top:1px;width:44px;height:23px;font-size:12.5px;line-height:23px">100</div>
<div class="t c" style="left:306px;top:1px;width:44px;height:23px;font-size:12.5px;line-height:23px">150</div>
<div class="t c" style="left:351px;top:1px;width:44px;height:23px;font-size:12.5px;line-height:23px">200</div>
<div class="t c" style="left:396px;top:1px;width:44px;height:23px;font-size:12.5px;line-height:23px">250</div>
<div class="t c" style="left:441px;top:1px;width:44px;height:23px;font-size:12.5px;line-height:23px">300</div>
<div class="t c" style="left:486px;top:1px;width:44px;height:23px;font-size:12.5px;line-height:23px">350</div>
<div class="t c" style="left:531px;top:1px;width:44px;height:23px;font-size:12.5px;line-height:23px">400</div>
<div class="t c" style="left:576px;top:1px;width:44px;height:23px;font-size:12.5px;line-height:23px">425</div>
<div class="t c" style="left:621px;top:1px;width:44px;height:23px;font-size:12.5px;line-height:23px">450</div>
<div class="t c" style="left:666px;top:1px;width:44px;height:23px;font-size:12.5px;line-height:23px">475</div>
<div class="abs" style="left:2px;top:77px;width:32px;height:23px;background:#a4b9d0"></div>
<div class="abs" style="left:396px;top:76px;width:44px;height:25px;background:#e9e9f5"></div>
<div class="abs" style="left:0px;top:49px;width:35px;height:1px;background:#a9bdd6"></div>
<div class="abs" style="left:35px;top:49px;width:1227px;height:1px;background:#d3dbe9"></div>
<div class="abs" style="left:0px;top:75px;width:35px;height:1px;background:#a9bdd6"></div>
<div class="abs" style="left:35px;top:75px;width:1227px;height:1px;background:#d3dbe9"></div>
<div class="abs" style="left:0px;top:101px;width:35px;height:1px;background:#a9bdd6"></div>
<div class="abs" style="left:35px;top:101px;width:1227px;height:1px;background:#d3dbe9"></div>
<div class="abs" style="left:0px;top:127px;width:35px;height:1px;background:#a9bdd6"></div>
<div class="abs" style="left:35px;top:127px;width:1227px;height:1px;background:#d3dbe9"></div>
<div class="abs" style="left:0px;top:153px;width:35px;height:1px;background:#a9bdd6"></div>
<div class="abs" style="left:35px;top:153px;width:1227px;height:1px;background:#d3dbe9"></div>
<div class="abs" style="left:0px;top:179px;width:35px;height:1px;background:#a9bdd6"></div>
<div class="abs" style="left:35px;top:179px;width:1227px;height:1px;background:#d3dbe9"></div>
<div class="abs" style="left:0px;top:205px;width:35px;height:1px;background:#a9bdd6"></div>
<div class="abs" style="left:35px;top:205px;width:1227px;height:1px;background:#d3dbe9"></div>
<div class="abs" style="left:0px;top:231px;width:35px;height:1px;background:#a9bdd6"></div>
<div class="abs" style="left:35px;top:231px;width:1227px;height:1px;background:#d3dbe9"></div>
<div class="t c" style="left:0px;top:26px;width:35px;height:25px;font-size:12.5px;line-height:25px">1</div>
<div class="t c" style="left:36px;top:26px;width:44px;height:25px;font-size:12.5px;line-height:25px">3</div>
<div class="t c" style="left:81px;top:26px;width:44px;height:25px;font-size:12.5px;line-height:25px">16</div>
<div class="t c" style="left:126px;top:26px;width:44px;height:25px;font-size:12.5px;line-height:25px">510</div>
<div class="t c" style="left:171px;top:26px;width:44px;height:25px;font-size:12.5px;line-height:25px">345</div>
<div class="t c" style="left:216px;top:26px;width:44px;height:25px;font-size:12.5px;line-height:25px">189</div>
<div class="t c" style="left:261px;top:26px;width:44px;height:25px;font-size:12.5px;line-height:25px">189</div>
<div class="t c" style="left:306px;top:26px;width:44px;height:25px;font-size:12.5px;line-height:25px">189</div>
<div class="t c" style="left:351px;top:26px;width:44px;height:25px;font-size:12.5px;line-height:25px">183</div>
<div class="t c" style="left:396px;top:26px;width:44px;height:25px;font-size:12.5px;line-height:25px">167</div>
<div class="t c" style="left:441px;top:26px;width:44px;height:25px;font-size:12.5px;line-height:25px">153</div>
<div class="t c" style="left:486px;top:26px;width:44px;height:25px;font-size:12.5px;line-height:25px">143</div>
<div class="t c" style="left:531px;top:26px;width:44px;height:25px;font-size:12.5px;line-height:25px">-125</div>
<div class="t c" style="left:576px;top:26px;width:44px;height:25px;font-size:12.5px;line-height:25px">-93</div>
<div class="t c" style="left:621px;top:26px;width:44px;height:25px;font-size:12.5px;line-height:25px">-66</div>
<div class="t c" style="left:666px;top:26px;width:44px;height:25px;font-size:12.5px;line-height:25px">-43</div>
<div class="t c" style="left:0px;top:52px;width:35px;height:25px;font-size:12.5px;line-height:25px">2</div>
<div class="t c" style="left:36px;top:52px;width:44px;height:25px;font-size:12.5px;line-height:25px">16</div>
<div class="t c" style="left:81px;top:52px;width:44px;height:25px;font-size:12.5px;line-height:25px">36</div>
<div class="t c" style="left:126px;top:52px;width:44px;height:25px;font-size:12.5px;line-height:25px">500</div>
<div class="t c" style="left:171px;top:52px;width:44px;height:25px;font-size:12.5px;line-height:25px">325</div>
<div class="t c" style="left:216px;top:52px;width:44px;height:25px;font-size:12.5px;line-height:25px">185</div>
<div class="t c" style="left:261px;top:52px;width:44px;height:25px;font-size:12.5px;line-height:25px">185</div>
<div class="t c" style="left:306px;top:52px;width:44px;height:25px;font-size:12.5px;line-height:25px">183</div>
<div class="t c" style="left:351px;top:52px;width:44px;height:25px;font-size:12.5px;line-height:25px">170</div>
<div class="t c" style="left:396px;top:52px;width:44px;height:25px;font-size:12.5px;line-height:25px">157</div>
<div class="t c" style="left:441px;top:52px;width:44px;height:25px;font-size:12.5px;line-height:25px">143</div>
<div class="t c" style="left:486px;top:52px;width:44px;height:25px;font-size:12.5px;line-height:25px">133</div>
<div class="t c" style="left:531px;top:52px;width:44px;height:25px;font-size:12.5px;line-height:25px">-125</div>
<div class="t c" style="left:576px;top:52px;width:44px;height:25px;font-size:12.5px;line-height:25px">-93</div>
<div class="t c" style="left:621px;top:52px;width:44px;height:25px;font-size:12.5px;line-height:25px">-66</div>
<div class="t c" style="left:666px;top:52px;width:44px;height:25px;font-size:12.5px;line-height:25px">-43</div>
<div class="t c" style="left:0px;top:78px;width:35px;height:25px;font-size:12.5px;line-height:25px">3</div>
<div class="t c" style="left:36px;top:78px;width:44px;height:25px;font-size:12.5px;line-height:25px">36</div>
<div class="t c" style="left:81px;top:78px;width:44px;height:25px;font-size:12.5px;line-height:25px">60</div>
<div class="t c" style="left:126px;top:78px;width:44px;height:25px;font-size:12.5px;line-height:25px">490</div>
<div class="t c" style="left:171px;top:78px;width:44px;height:25px;font-size:12.5px;line-height:25px">315</div>
<div class="t c" style="left:216px;top:78px;width:44px;height:25px;font-size:12.5px;line-height:25px">181</div>
<div class="t c" style="left:261px;top:78px;width:44px;height:25px;font-size:12.5px;line-height:25px">181</div>
<div class="t c" style="left:306px;top:78px;width:44px;height:25px;font-size:12.5px;line-height:25px">173</div>
<div class="t c" style="left:351px;top:78px;width:44px;height:25px;font-size:12.5px;line-height:25px">160</div>
<div class="t c" style="left:396px;top:78px;width:44px;height:25px;font-size:12.5px;line-height:25px">147</div>
<div class="t c" style="left:441px;top:78px;width:44px;height:25px;font-size:12.5px;line-height:25px">133</div>
<div class="t c" style="left:486px;top:78px;width:44px;height:25px;font-size:12.5px;line-height:25px">123</div>
<div class="t c" style="left:531px;top:78px;width:44px;height:25px;font-size:12.5px;line-height:25px">117</div>
<div class="t c" style="left:576px;top:78px;width:44px;height:25px;font-size:12.5px;line-height:25px">-93</div>
<div class="t c" style="left:621px;top:78px;width:44px;height:25px;font-size:12.5px;line-height:25px">-66</div>
<div class="t c" style="left:666px;top:78px;width:44px;height:25px;font-size:12.5px;line-height:25px">-43</div>
<div class="t c" style="left:0px;top:104px;width:35px;height:25px;font-size:12.5px;line-height:25px">4</div>
<div class="t c" style="left:36px;top:104px;width:44px;height:25px;font-size:12.5px;line-height:25px">60</div>
<div class="t c" style="left:81px;top:104px;width:44px;height:25px;font-size:12.5px;line-height:25px">100</div>
<div class="t c" style="left:126px;top:104px;width:44px;height:25px;font-size:12.5px;line-height:25px">490</div>
<div class="t c" style="left:171px;top:104px;width:44px;height:25px;font-size:12.5px;line-height:25px">305</div>
<div class="t c" style="left:216px;top:104px;width:44px;height:25px;font-size:12.5px;line-height:25px">181</div>
<div class="t c" style="left:261px;top:104px;width:44px;height:25px;font-size:12.5px;line-height:25px">181</div>
<div class="t c" style="left:306px;top:104px;width:44px;height:25px;font-size:12.5px;line-height:25px">167</div>
<div class="t c" style="left:351px;top:104px;width:44px;height:25px;font-size:12.5px;line-height:25px">150</div>
<div class="t c" style="left:396px;top:104px;width:44px;height:25px;font-size:12.5px;line-height:25px">137</div>
<div class="t c" style="left:441px;top:104px;width:44px;height:25px;font-size:12.5px;line-height:25px">123</div>
<div class="t c" style="left:486px;top:104px;width:44px;height:25px;font-size:12.5px;line-height:25px">117</div>
<div class="t c" style="left:531px;top:104px;width:44px;height:25px;font-size:12.5px;line-height:25px">110</div>
<div class="t c" style="left:576px;top:104px;width:44px;height:25px;font-size:12.5px;line-height:25px">-93</div>
<div class="t c" style="left:621px;top:104px;width:44px;height:25px;font-size:12.5px;line-height:25px">-66</div>
<div class="t c" style="left:666px;top:104px;width:44px;height:25px;font-size:12.5px;line-height:25px">-43</div>
<div class="t c" style="left:0px;top:130px;width:35px;height:25px;font-size:12.5px;line-height:25px">5</div>
<div class="t c" style="left:36px;top:130px;width:44px;height:25px;font-size:12.5px;line-height:25px">100</div>
<div class="t c" style="left:81px;top:130px;width:44px;height:25px;font-size:12.5px;line-height:25px">150</div>
<div class="t c" style="left:126px;top:130px;width:44px;height:25px;font-size:12.5px;line-height:25px">480</div>
<div class="t c" style="left:171px;top:130px;width:44px;height:25px;font-size:12.5px;line-height:25px">285</div>
<div class="t c" style="left:216px;top:130px;width:44px;height:25px;font-size:12.5px;line-height:25px">178</div>
<div class="t c" style="left:261px;top:130px;width:44px;height:25px;font-size:12.5px;line-height:25px">173</div>
<div class="t c" style="left:306px;top:130px;width:44px;height:25px;font-size:12.5px;line-height:25px">160</div>
<div class="t c" style="left:351px;top:130px;width:44px;height:25px;font-size:12.5px;line-height:25px">147</div>
<div class="t c" style="left:396px;top:130px;width:44px;height:25px;font-size:12.5px;line-height:25px">133</div>
<div class="t c" style="left:441px;top:130px;width:44px;height:25px;font-size:12.5px;line-height:25px">120</div>
<div class="t c" style="left:486px;top:130px;width:44px;height:25px;font-size:12.5px;line-height:25px">113</div>
<div class="t c" style="left:531px;top:130px;width:44px;height:25px;font-size:12.5px;line-height:25px">107</div>
<div class="t c" style="left:576px;top:130px;width:44px;height:25px;font-size:12.5px;line-height:25px">-93</div>
<div class="t c" style="left:621px;top:130px;width:44px;height:25px;font-size:12.5px;line-height:25px">-66</div>
<div class="t c" style="left:666px;top:130px;width:44px;height:25px;font-size:12.5px;line-height:25px">-43</div>
<div class="t c" style="left:0px;top:156px;width:35px;height:25px;font-size:12.5px;line-height:25px">6</div>
<div class="t c" style="left:36px;top:156px;width:44px;height:25px;font-size:12.5px;line-height:25px">150</div>
<div class="t c" style="left:81px;top:156px;width:44px;height:25px;font-size:12.5px;line-height:25px">250</div>
<div class="t c" style="left:126px;top:156px;width:44px;height:25px;font-size:12.5px;line-height:25px">470</div>
<div class="t c" style="left:171px;top:156px;width:44px;height:25px;font-size:12.5px;line-height:25px">265</div>
<div class="t c" style="left:216px;top:156px;width:44px;height:25px;font-size:12.5px;line-height:25px">174</div>
<div class="t c" style="left:261px;top:156px;width:44px;height:25px;font-size:12.5px;line-height:25px">163</div>
<div class="t c" style="left:306px;top:156px;width:44px;height:25px;font-size:12.5px;line-height:25px">153</div>
<div class="t c" style="left:351px;top:156px;width:44px;height:25px;font-size:12.5px;line-height:25px">143</div>
<div class="t c" style="left:396px;top:156px;width:44px;height:25px;font-size:12.5px;line-height:25px">130</div>
<div class="t c" style="left:441px;top:156px;width:44px;height:25px;font-size:12.5px;line-height:25px">117</div>
<div class="t c" style="left:486px;top:156px;width:44px;height:25px;font-size:12.5px;line-height:25px">110</div>
<div class="t c" style="left:531px;top:156px;width:44px;height:25px;font-size:12.5px;line-height:25px">103</div>
<div class="t c" style="left:576px;top:156px;width:44px;height:25px;font-size:12.5px;line-height:25px">-93</div>
<div class="t c" style="left:621px;top:156px;width:44px;height:25px;font-size:12.5px;line-height:25px">-66</div>
<div class="t c" style="left:666px;top:156px;width:44px;height:25px;font-size:12.5px;line-height:25px">-43</div>
<div class="t c" style="left:0px;top:182px;width:35px;height:25px;font-size:12.5px;line-height:25px">7</div>
<div class="abs" style="left:35px;top:23px;width:1px;height:192px;background:#a9bdd6"></div>
<div class="abs" style="left:80px;top:23px;width:1px;height:192px;background:#d3dbe9"></div>
<div class="abs" style="left:125px;top:23px;width:1px;height:192px;background:#d3dbe9"></div>
<div class="abs" style="left:170px;top:23px;width:1px;height:192px;background:#d3dbe9"></div>
<div class="abs" style="left:215px;top:23px;width:1px;height:192px;background:#d3dbe9"></div>
<div class="abs" style="left:260px;top:23px;width:1px;height:192px;background:#d3dbe9"></div>
<div class="abs" style="left:305px;top:23px;width:1px;height:192px;background:#d3dbe9"></div>
<div class="abs" style="left:350px;top:23px;width:1px;height:192px;background:#d3dbe9"></div>
<div class="abs" style="left:395px;top:23px;width:1px;height:192px;background:#d3dbe9"></div>
<div class="abs" style="left:440px;top:23px;width:1px;height:192px;background:#d3dbe9"></div>
<div class="abs" style="left:485px;top:23px;width:1px;height:192px;background:#d3dbe9"></div>
<div class="abs" style="left:530px;top:23px;width:1px;height:192px;background:#d3dbe9"></div>
<div class="abs" style="left:575px;top:23px;width:1px;height:192px;background:#d3dbe9"></div>
<div class="abs" style="left:620px;top:23px;width:1px;height:192px;background:#d3dbe9"></div>
<div class="abs" style="left:665px;top:23px;width:1px;height:192px;background:#d3dbe9"></div>
<div class="abs" style="left:710px;top:23px;width:1px;height:192px;background:#d3dbe9"></div>
<div class="abs" style="left:755px;top:23px;width:1px;height:192px;background:#d3dbe9"></div>
<div class="abs" style="left:800px;top:23px;width:1px;height:192px;background:#d3dbe9"></div>
<div class="abs" style="left:845px;top:23px;width:1px;height:192px;background:#d3dbe9"></div>
<div class="abs" style="left:890px;top:23px;width:1px;height:192px;background:#d3dbe9"></div>
<div class="abs" style="left:935px;top:23px;width:1px;height:192px;background:#d3dbe9"></div>
<div class="abs" style="left:980px;top:23px;width:1px;height:192px;background:#d3dbe9"></div>
<div class="abs" style="left:1025px;top:23px;width:1px;height:192px;background:#d3dbe9"></div>
<div class="abs" style="left:1070px;top:23px;width:1px;height:192px;background:#d3dbe9"></div>
<div class="abs" style="left:1115px;top:23px;width:1px;height:192px;background:#d3dbe9"></div>
<div class="abs" style="left:1160px;top:23px;width:1px;height:192px;background:#d3dbe9"></div>
<div class="abs" style="left:1205px;top:23px;width:1px;height:192px;background:#d3dbe9"></div>
<div class="abs" style="left:395px;top:75px;width:46px;height:27px;border:1px solid #000"></div>
</div>
<div class="abs" style="left:206px;top:760px;width:1227px;height:16px;background:#f0f0f0"></div>
<div class="abs" style="left:223px;top:767px;width:1170px;height:2px;background:#858585"></div>
<div class="abs" style="left:0px;top:776px;width:1433px;height:1px;background:#d9d9d9"></div>
<div class="abs" style="left:0px;top:777px;width:1433px;height:18px;background:#f0f0f0"></div>
<div class="t" style="left:2px;top:779px;font-size:12px;line-height:16px">就绪</div>
<div class="abs" style="left:1337px;top:778px;width:1px;height:16px;background:#d6d6d6"></div>
<div class="abs" style="left:1376px;top:778px;width:1px;height:16px;background:#d6d6d6"></div>
<div class="abs" style="left:1413px;top:778px;width:1px;height:16px;background:#d6d6d6"></div>
<div class="t" style="left:1342px;top:779px;font-size:13px;line-height:16px">NUM</div>
<div class="abs" style="left:1429px;top:785px;width:2px;height:2px;background:#b8b8b8"></div>
<div class="abs" style="left:1426px;top:788px;width:2px;height:2px;background:#b8b8b8"></div>
<div class="abs" style="left:1429px;top:788px;width:2px;height:2px;background:#b8b8b8"></div>
<div class="abs" style="left:1423px;top:791px;width:2px;height:2px;background:#b8b8b8"></div>
<div class="abs" style="left:1426px;top:791px;width:2px;height:2px;background:#b8b8b8"></div>
<div class="abs" style="left:1429px;top:791px;width:2px;height:2px;background:#b8b8b8"></div>
</div></body></html>
